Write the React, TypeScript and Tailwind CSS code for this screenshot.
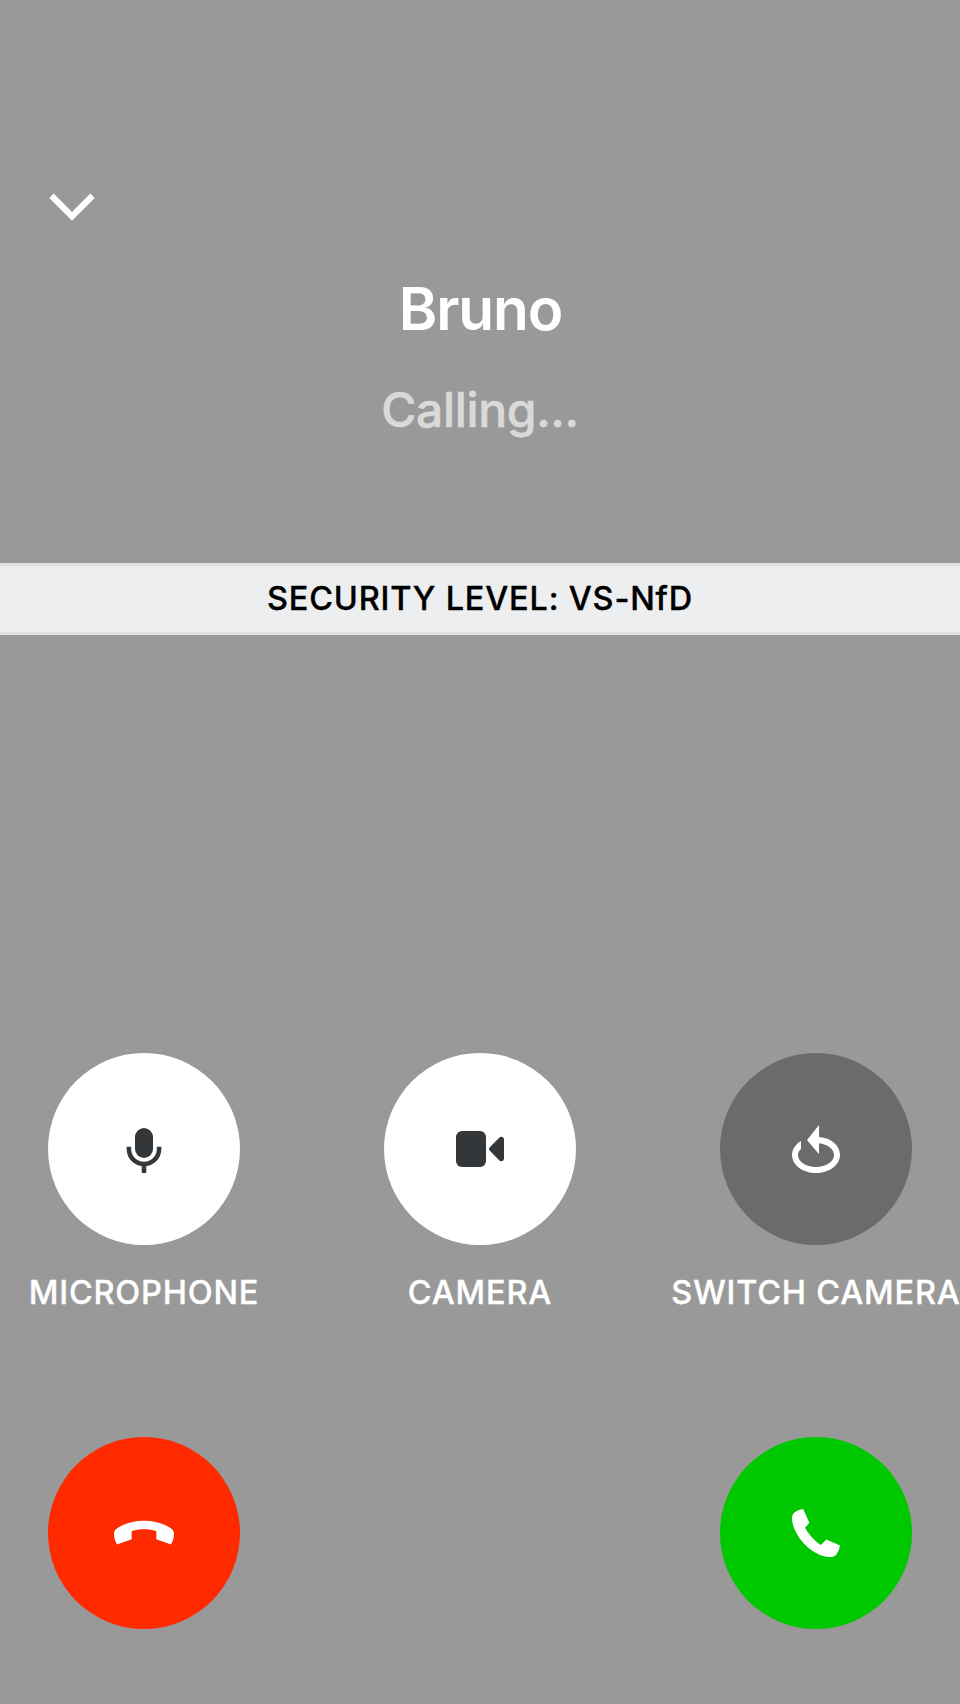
import type { ReactNode } from "react";

function CallButton({ color, children, label }: { color: string; children: ReactNode; label: string }) {
  return (
    <button aria-label={label} className={`flex size-48 items-center justify-center rounded-full ${color}`}>
      {children}
    </button>
  );
}

function Control({ label, color, icon }: { label: string; color: string; icon: ReactNode }) {
  return (
    <div className="flex w-48 flex-col items-center gap-7">
      <CallButton color={color} label={label}>
        {icon}
      </CallButton>
      <span className="text-[32.5px] leading-10 font-medium tracking-[0.8px] whitespace-nowrap [-webkit-text-stroke:0.35px_currentColor]">
        {label}
      </span>
    </div>
  );
}

function ChevronIcon() {
  return (
    <svg width="48" height="48" viewBox="0 0 48 48" fill="none">
      <path d="M3.5 12.8 24 33.4 44.5 12.8" stroke="currentColor" strokeWidth="6.2" />
    </svg>
  );
}

function MicrophoneIcon() {
  return (
    <svg width="48" height="48" viewBox="0 0 48 48" fill="none">
      <rect x="15" y="3" width="18" height="30" rx="9" fill="currentColor" />
      <path d="M8.9 21.7V24a15.1 15.1 0 0 0 30.2 0v-2.3M24 39v9" stroke="currentColor" strokeWidth="4.5" />
    </svg>
  );
}

function CameraIcon() {
  return (
    <svg width="48" height="48" viewBox="0 0 48 48" fill="currentColor">
      <rect y="6" width="30" height="36" rx="6" />
      <path d="M33.8 22.2 43.2 12.7C45 10.9 48 12 48 14.6v18.8c0 2.6-3 3.7-4.8 1.9l-9.4-9.5a2.6 2.6 0 0 1 0-3.6Z" />
    </svg>
  );
}

function SwitchCameraIcon() {
  return (
    <svg width="48" height="48" viewBox="0 0 48 48" fill="currentColor" className="overflow-visible">
      <path d="M27 0v12.1C39 13 48 20.6 48 30c0 10-10.7 18-24 18S0 40 0 30c0-5.6 3.4-10.6 9-14v8c-2 1.7-3 3.8-3 6 0 6.6 8 12 18 12s18-5.4 18-12c0-6-6.400-10.900-15-11.800v11L15 15Z" />
    </svg>
  );
}

function HangUpIcon() {
  return (
    <svg width="60" height="60" viewBox="0 0 60 60" fill="currentColor">
      <path d="M3 41.4C1.2 38 0 35 0 31.5c0-3.3.8-4.8 3.6-6.5C10.5 20.5 19.5 17.7 30 17.7S49.5 20.5 56.4 25c2.8 1.7 3.6 3.2 3.6 6.5 0 3.5-1.2 6.5-3 9.900l-14.700-5.100v-8.100C38.500 26.900 34.500 26.300 30 26.300s-8.500.6-12.300 1.900v8.100Z" />
    </svg>
  );
}

function PhoneIcon() {
  return (
    <svg width="48" height="48" viewBox="0 0 48 48" fill="currentColor">
      <path d="M11.2 0 17.4 13.7 13 18.7C16.8 25.5 22.2 31.5 28.7 36l5.7-5.4L48 36.5c-.7 3.5-1.7 6.6-3.7 9C42.8 47.4 41 48 37.5 48 20 47.5 1 27 0 10 0 6.8.6 5 2.5 3.6 4.9 1.7 7.5.5 11.2 0Z" />
    </svg>
  );
}

export default function App() {
  return (
    <main className="flex h-[1704px] w-[960px] flex-col overflow-hidden bg-[#999999] font-['Inter',sans-serif] text-white">
      <header className="flex h-[563px] flex-col pt-[183px]">
        <button aria-label="Minimize" className="ml-12 size-12">
          <ChevronIcon />
        </button>
        <div className="mt-[42px] flex flex-col items-center">
          <h1 className="pl-px text-[58.5px] leading-[72px] font-semibold tracking-[-1.1px]">Bruno</h1>
          <p className="mt-[35px] text-[48px] leading-[60px] font-medium tracking-[-0.35px] text-[#d9d9d9] [-webkit-text-stroke:0.6px_currentColor]">
            Calling...
          </p>
        </div>
      </header>
      <div className="flex h-[72px] items-center justify-center border-y-3 border-[#dce0e3] bg-[#edeef0] text-[32.5px] font-medium tracking-[0.8px] text-black [-webkit-text-stroke:0.35px_currentColor]">
        SECURITY LEVEL: VS-NfD
      </div>
      <section className="mt-[418px] flex justify-between px-12">
        <Control label="MICROPHONE" color="bg-white text-[#33373a]" icon={<MicrophoneIcon />} />
        <Control label="CAMERA" color="bg-white text-[#33373a]" icon={<CameraIcon />} />
        <Control label="SWITCH CAMERA" color="bg-[#6b6b6b]" icon={<SwitchCameraIcon />} />
      </section>
      <section className="mt-[124px] flex justify-between px-12">
        <CallButton label="Hang up" color="bg-[#ff2a00]">
          <HangUpIcon />
        </CallButton>
        <CallButton label="Accept" color="bg-[#00c800]">
          <PhoneIcon />
        </CallButton>
      </section>
    </main>
  );
}
